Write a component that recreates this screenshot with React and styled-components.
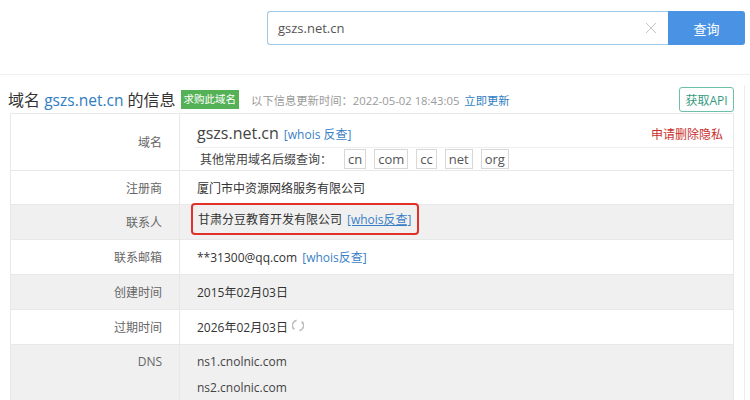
import styled, { createGlobalStyle } from 'styled-components';

const GlobalStyle = createGlobalStyle`
  body {
    margin: 0;
    background: #fff;
    font-family: "Open Sans", "Noto Sans CJK SC", sans-serif;
    color: #333;
  }
`;

const rows = [
  { label: '注册商', h: 34, value: '厦门市中资源网络服务有限公司' },
  { label: '联系人', h: 35, shade: true, highlight: true, value: '甘肃分豆教育开发有限公司' },
  { label: '联系邮箱', h: 35, email: true, value: '**31300@qq.com' },
  { label: '创建时间', h: 35, shade: true, value: '2015年02月03日' },
  { label: '过期时间', h: 35, refresh: true, value: '2026年02月03日' },
];

const suffixes = ['cn', 'com', 'cc', 'net', 'org'];

export default function App() {
  return (
    <>
      <GlobalStyle />
      <Header>
        <SearchBox>
          <SearchInput>
            <span>gszs.net.cn</span>
            <svg width="12" height="12" viewBox="0 0 12 12">
              <path d="M1 1L11 11M11 1L1 11" stroke="#c4c4c4" strokeWidth="1" fill="none" />
            </svg>
          </SearchInput>
          <SearchButton>查询</SearchButton>
        </SearchBox>
      </Header>
      <Body>
        <Main>
          <TitleRow>
            <Title>
              域名 <Blue>gszs.net.cn</Blue> 的信息
            </Title>
            <Badge>求购此域名</Badge>
            <UpdateInfo>
              以下信息更新时间：2022-05-02 18:43:05
              <UpdateLink>立即更新</UpdateLink>
            </UpdateInfo>
            <ApiButton>获取API</ApiButton>
          </TitleRow>
          <Table>
            <Row $h={56}>
              <Label>域名</Label>
              <Value>
                <TopLine>
                  <span>
                    <DomainBig>gszs.net.cn</DomainBig>
                    <WhoisLink>[whois 反查]</WhoisLink>
                  </span>
                  <DeletePrivacy>申请删除隐私</DeletePrivacy>
                </TopLine>
                <SuffixLine>
                  <SuffixText>其他常用域名后缀查询：</SuffixText>
                  {suffixes.map(s => <Tag key={s}>{s}</Tag>)}
                </SuffixLine>
              </Value>
            </Row>
            {rows.map(r => (
              <Row key={r.label} $h={r.h} $shade={r.shade}>
                <Label>{r.label}</Label>
                <Value $tight={r.highlight}>
                  {r.highlight ? (
                    <Highlight>
                      {r.value}
                      <WhoisLink $underline>[whois反查]</WhoisLink>
                    </Highlight>
                  ) : (
                    <Line>
                      <span>{r.value}</span>
                      {r.email && <WhoisLink>[whois反查]</WhoisLink>}
                      {r.refresh && <RefreshIcon />}
                    </Line>
                  )}
                </Value>
              </Row>
            ))}
            <Row $h={70} $shade>
              <Label $top>DNS</Label>
              <Value $top>
                <DnsLine>ns1.cnolnic.com</DnsLine>
                <DnsLine>ns2.cnolnic.com</DnsLine>
              </Value>
            </Row>
          </Table>
        </Main>
        <Side />
      </Body>
    </>
  );
}

function RefreshIcon() {
  return (
    <Spin width="12" height="13" viewBox="0 0 12 13">
      <path d="M4.6 1.4A5 5 0 0 0 2.2 10.2" stroke="#bdbdbd" strokeWidth="1.6" fill="none" />
      <path d="M7.4 11.6A5 5 0 0 0 9.8 2.8" stroke="#bdbdbd" strokeWidth="1.6" fill="none" />
      <path d="M2.2 10.2L0.8 8.9M9.8 2.8L11.2 4.1" stroke="#bdbdbd" strokeWidth="1.3" fill="none" />
    </Spin>
  );
}

const Header = styled.div`
  height: 75px;
  box-sizing: border-box;
  display: flex;
  justify-content: flex-end;
  align-items: flex-start;
  padding: 11px 5px 0 0;
  border-bottom: 1px solid #f1f1f1;
`;

const SearchBox = styled.div`
  display: flex;
  width: 478px;
  height: 34px;
`;

const SearchInput = styled.div`
  flex: 1;
  display: flex;
  align-items: center;
  justify-content: space-between;
  border: 1px solid #9ccae6;
  border-right: none;
  border-radius: 3px 0 0 3px;
  padding: 0 11px 0 10px;
  font-size: 13px;
  color: #555;
`;

const SearchButton = styled.button`
  width: 77px;
  border: none;
  border-radius: 0 3px 3px 0;
  background: #4a93e4;
  color: #fff;
  font-size: 13px;
  font-family: inherit;
  padding: 0;
`;

const Body = styled.div`
  display: flex;
`;

const Main = styled.div`
  width: 736px;
  box-sizing: border-box;
  padding: 11px 2px 0 8px;
`;

const Side = styled.div`
  flex: 1;
  margin: 10px 0 0 8px;
  border-left: 1px solid #ededed;
  height: 320px;
`;

const TitleRow = styled.div`
  display: flex;
  align-items: center;
  height: 27px;
`;

const Title = styled.div`
  font-size: 16px;
  color: #333;
  white-space: pre;
  margin-top: -2px;
`;

const Blue = styled.span`
  font-size: 15.5px;
  color: #2f7dc2;
`;

const Badge = styled.span`
  margin-left: 5px;
  height: 19px;
  line-height: 19px;
  padding: 0 3px;
  background: #55b155;
  color: #fff;
  font-size: 10.5px;
`;

const UpdateInfo = styled.span`
  margin-left: 12px;
  font-size: 11.3px;
  color: #9a9a9a;
`;

const UpdateLink = styled.span`
  margin-left: 5px;
  color: #2f7dc2;
`;

const ApiButton = styled.span`
  margin-left: auto;
  width: 55px;
  height: 25px;
  box-sizing: border-box;
  display: flex;
  align-items: center;
  justify-content: center;
  border: 1px solid #6cbfa8;
  border-radius: 3px;
  color: #359b80;
  font-size: 12px;
`;

const Table = styled.div`
  margin-left: 2px;
  border: 1px solid #e8e8e8;
  border-bottom: none;
`;

const Row = styled.div`
  display: grid;
  grid-template-columns: 169px 1fr;
  height: ${p => p.$h}px;
  box-sizing: border-box;
  background: ${p => (p.$shade ? '#f0f0f0' : '#fff')};
  & + & {
    border-top: 1px solid #e8e8e8;
  }
`;

const Label = styled.div`
  display: flex;
  justify-content: flex-end;
  align-items: ${p => (p.$top ? 'flex-start' : 'center')};
  padding: ${p => (p.$top ? '4px 17px 0 0' : '0 17px 0 0')};
  line-height: ${p => (p.$top ? '26px' : 'normal')};
  border-right: 1px solid #e8e8e8;
  font-size: 12px;
  color: #666;
`;

const Value = styled.div`
  display: flex;
  flex-direction: column;
  justify-content: ${p => (p.$top || p.$tight ? 'flex-start' : 'center')};
  padding: ${p => (p.$top ? '4px 0 0 17px' : p.$tight ? '0 0 0 11px' : '0 0 0 17px')};
  font-size: 12px;
  color: #333;
`;

const TopLine = styled.div`
  display: flex;
  justify-content: space-between;
  align-items: baseline;
  margin-left: -2px;
  padding: 7px 10px 1px 2px;
  line-height: 23px;
  border-bottom: 1px solid #eeeeee;
`;

const DomainBig = styled.span`
  font-size: 16px;
  color: #444;
`;

const WhoisLink = styled.span`
  margin-left: 5px;
  font-size: 12px;
  color: #3a7fc6;
  text-decoration: ${p => (p.$underline ? 'underline' : 'none')};
`;

const DeletePrivacy = styled.span`
  font-size: 12px;
  color: #c9302c;
`;

const SuffixLine = styled.div`
  display: flex;
  align-items: center;
  gap: 8px;
  padding-top: 1px;
`;

const SuffixText = styled.span`
  margin-left: 3px;
  margin-right: 4px;
  color: #444;
`;

const Tag = styled.span`
  height: 18px;
  line-height: 18px;
  padding: 0 3px;
  border: 1px solid #d8d8d8;
  font-size: 13px;
  color: #555;
`;

const Highlight = styled.div`
  align-self: flex-start;
  display: flex;
  align-items: center;
  height: 32px;
  box-sizing: border-box;
  margin-top: -2px;
  padding: 0 5px;
  border: 2px solid #e2302a;
  border-radius: 4px;
  color: #333;
`;

const Line = styled.div`
  display: flex;
  align-items: center;
`;

const Spin = styled.svg`
  margin-left: 4px;
  margin-top: -3px;
`;

const DnsLine = styled.div`
  line-height: 26px;
  font-size: 12px;
  color: #444;
`;
